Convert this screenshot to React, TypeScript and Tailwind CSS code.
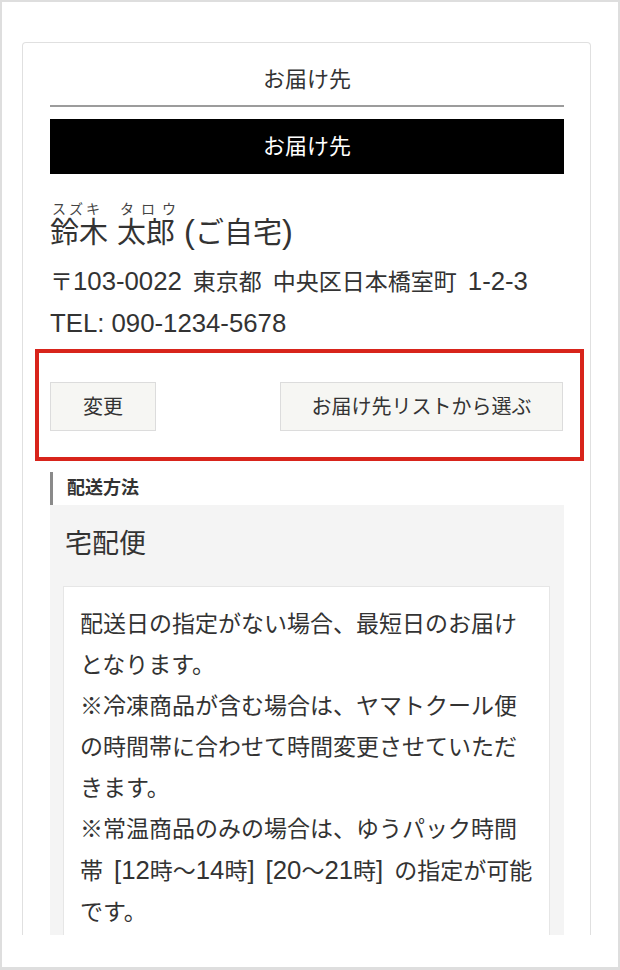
import React from 'react';

function L({ children }: { children: React.ReactNode }) {
    return <span className="text-[1.12em]">{children}</span>;
}

// word gap a bit wider than a plain space
function Gap() {
    return <span className="inline-block w-[11px]" />;
}

const noticeLines: React.ReactNode[] = [
    '配送日の指定がない場合、最短日のお届け',
    'となります。',
    '※冷凍商品が含む場合は、ヤマトクール便',
    'の時間帯に合わせて時間変更させていただ',
    'きます。',
    '※常温商品のみの場合は、ゆうパック時間',
    <>帯<Gap /><L>[12</L>時〜<L>14</L>時<L>]</L><Gap /><L>[20</L>〜<L>21</L>時<L>]</L><Gap />の指定が可能</>,
    'です。',
];

export default function App() {
    return (
        <div className="w-[620px] h-[970px] bg-white border-2 border-b-[3px] border-[#dedede] pt-[40px] pl-[20px] pr-[27px] font-['Liberation_Sans','Noto_Sans_CJK_JP',sans-serif] text-[#333]">
            {/* Card (cut off at the bottom of the capture) */}
            <div className="h-[893px] overflow-hidden border border-b-0 border-[#e0e0e0] rounded-t-[4px] pt-[22px] pl-[27px] pr-[26px]">

                {/* Title */}
                <div className="text-center text-[22px] leading-[30px] pb-[10px] border-b-2 border-[#9c9c9c]">
                    お届け先
                </div>
                <div className="mt-[12px] h-[55px] bg-black text-white text-[22px] flex items-center justify-center">
                    お届け先
                </div>

                {/* Name with reading */}
                <div className="mt-[27px]">
                    <div className="flex h-[16px] text-[14px] leading-[16px] text-[#444]">
                        <span className="ml-[2px] w-[68px] tracking-[3px]">スズキ</span>
                        <span className="tracking-[7px]">タロウ</span>
                    </div>
                    <div className="text-[29px] leading-[30px]">
                        鈴木<L> </L>太郎<L> (</L>ご自宅<L>)</L>
                    </div>
                </div>

                {/* Address */}
                <div className="mt-[13px] text-[23px] leading-[41px]">
                    <p className="whitespace-nowrap">〒<L>103-0022</L><Gap />東京都<Gap />中央区日本橋室町<Gap /><L>1-2-3</L></p>
                    <p><L>TEL: 090-1234-5678</L></p>
                </div>

                {/* Highlighted buttons */}
                <div className="mt-[4px] -ml-[15px] -mr-[20px] border-4 border-[#d8241b] pt-[29px] pb-[26px] pl-[11px] pr-[17px] flex justify-between">
                    <button className="w-[106px] h-[49px] bg-[#f6f6f3] border border-[#dcdcdc] text-[20px] text-[#333]">
                        変更
                    </button>
                    <button className="w-[283px] h-[49px] bg-[#f6f6f3] border border-[#dcdcdc] text-[20px] text-[#333]">
                        お届け先リストから選ぶ
                    </button>
                </div>

                {/* Delivery method */}
                <div className="mt-[11px] h-[33px] border-l-[3px] border-[#8a8a8a] pl-[14px] text-[18px] leading-[33px] font-bold">
                    配送方法
                </div>
                <div className="bg-[#f4f4f4] pt-[19px] pl-[13px] pr-[14px]">
                    <div className="pl-[2px] text-[27px] leading-[40px]">宅配便</div>
                    <div className="mt-[22px] bg-white border border-[#e6e6e6] pt-[17px] pb-[17px] pl-[16px] text-[23px] leading-[41px]">
                        {noticeLines.map((line, i) => (
                            <div key={i} className="whitespace-nowrap">{line}</div>
                        ))}
                    </div>
                </div>
            </div>
        </div>
    );
}
